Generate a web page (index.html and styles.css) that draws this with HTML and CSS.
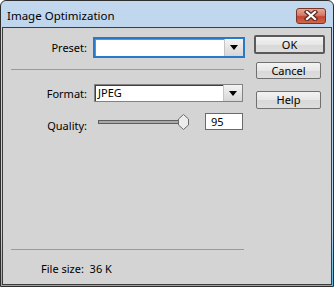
FILE: index.html
```html
<!DOCTYPE html>
<html lang="en">
<head>
    <meta charset="UTF-8">
    <title>Image Optimization</title>
    <link rel="stylesheet" href="styles.css">
</head>
<body>

    <div class="window">

        <!-- Title bar -->
        <div class="titlebar">
            <span class="title">Image Optimization</span>
            <div class="close">
                <svg width="16" height="11" viewBox="0 0 16 11">
                    <path d="M4 2 L12 9 M12 2 L4 9" stroke="#5a2a22" stroke-width="4.5" stroke-linecap="square"/>
                    <path d="M4 2 L12 9 M12 2 L4 9" stroke="#ffffff" stroke-width="2.2" stroke-linecap="square"/>
                </svg>
            </div>
        </div>

        <div class="client">

            <!-- Settings -->
            <div class="main">
                <div class="row preset-row">
                    <span class="label">Preset:</span>
                    <div class="combo focused">
                        <span class="combo-value"></span>
                        <span class="combo-arrow"><i class="tri"></i></span>
                    </div>
                </div>

                <div class="sep"></div>

                <div class="row format-row">
                    <span class="label">Format:</span>
                    <div class="combo">
                        <span class="combo-value">JPEG</span>
                        <span class="combo-arrow"><i class="tri"></i></span>
                    </div>
                </div>

                <div class="row quality-row">
                    <span class="label quality-label">Quality:</span>
                    <div class="slider">
                        <div class="track"></div>
                        <svg class="thumb" width="11" height="16" viewBox="0 0 11 16">
                            <path d="M5.5 0.5 L10.5 5 L10.5 11 L5.5 15.5 L0.5 11 L0.5 5 Z" fill="#ececec" stroke="#6a6a6a"/>
                        </svg>
                    </div>
                    <div class="number">95</div>
                </div>

                <div class="bottom">
                    <div class="sep sep-bottom"></div>
                    <div class="filesize">File size:&nbsp; 36 K</div>
                </div>
            </div>

            <!-- Dialog buttons -->
            <div class="buttons">
                <div class="btn btn-default">OK</div>
                <div class="btn btn-cancel">Cancel</div>
                <div class="btn btn-help">Help</div>
            </div>

        </div>
    </div>

</body>
</html>
```

FILE: styles.css
```css
body {
    margin: 0;
    padding: 0;
    background-color: #ffffff;
    font-family: "Noto Sans", "Open Sans", sans-serif;
    font-size: 11px;
    color: #000000;
}

/* Window frame */
.window {
    width: 334px;
    height: 287px;
    box-sizing: border-box;
    border: 1px solid #2e2e2e;
    border-radius: 6px 6px 0 0;
    background: linear-gradient(#c2d8ee, #b6cee8 40%, #bcd4ec 80%, #5cb6e6);
    display: flex;
    flex-direction: column;
}

.titlebar {
    height: 26px;
    display: flex;
    align-items: center;
    justify-content: space-between;
    padding: 2px 7px 0 6px;
    box-sizing: border-box;
}

.title {
    font-size: 11.5px;
    color: #000000;
}

.close {
    width: 30px;
    height: 16px;
    box-sizing: border-box;
    border: 1px solid #7a3328;
    border-radius: 3px;
    background: linear-gradient(#e6a796, #d47a66 45%, #c4442e 55%, #d2664a);
    display: flex;
    align-items: center;
    justify-content: center;
    margin-top: 1px;
}

/* Client area */
.client {
    flex: 1;
    margin: 0 1px 1px 1px;
    border: 1px solid #3c3c3c;
    background-color: #d4d4d4;
    display: grid;
    grid-template-columns: 235px 71px;
    column-gap: 8px;
    padding: 9px 6px 7px 8px;
}

.main {
    display: flex;
    flex-direction: column;
}

.row {
    display: flex;
    align-items: center;
}

.label {
    width: 76px;
    text-align: right;
    margin-right: 6px;
    flex-shrink: 0;
}

/* Combo boxes */
.combo {
    display: flex;
    box-sizing: border-box;
    background-color: #ffffff;
    border: 1px solid #828282;
    box-shadow: inset 1px 1px 0 #404040;
}

.preset-row .combo {
    width: 152px;
    height: 21px;
}

.combo.focused {
    border: 2px solid #2a78c8;
    box-shadow: inset 1px 1px 0 #8a8a8a;
}

.format-row {
    margin-top: 14px;
}

.format-row .combo {
    width: 149px;
    height: 18px;
    margin-left: 1px;
}

.combo-value {
    flex: 1;
    padding-left: 3px;
    line-height: 15px;
}

.combo-arrow {
    width: 18px;
    border-left: 1px solid #c4c4c4;
    background: linear-gradient(#f4f4f4, #d6d6d6);
    display: flex;
    align-items: center;
    justify-content: center;
}

.tri {
    width: 0;
    height: 0;
    border-left: 4px solid transparent;
    border-right: 4px solid transparent;
    border-top: 5px solid #000000;
}

.sep {
    height: 1px;
    width: 233px;
    background-color: #9a9a9a;
}

.preset-row + .sep {
    margin-top: 11px;
}

/* Quality slider */
.quality-row {
    margin-top: 11px;
    height: 17px;
}

.quality-label {
    padding-top: 7px;
}

.slider {
    width: 96px;
    height: 16px;
    display: flex;
    align-items: center;
    margin-left: 5px;
}

.track {
    width: 84px;
    height: 4px;
    box-sizing: border-box;
    border: 1px solid #5e5e5e;
    background-color: #a8a8a8;
    margin-right: -4px;
}

.thumb {
    display: block;
}

.number {
    width: 38px;
    height: 17px;
    box-sizing: border-box;
    border: 1px solid #6a6a6a;
    background-color: #ffffff;
    margin-left: 11px;
    padding-left: 5px;
    line-height: 15px;
}

.bottom {
    margin-top: auto;
}

.sep-bottom {
    margin-bottom: 11px;
}

.filesize {
    padding-left: 30px;
    height: 16px;
    line-height: 16px;
}

/* Buttons */
.buttons {
    display: flex;
    flex-direction: column;
    align-items: flex-start;
    margin-top: -2px;
}

.btn {
    box-sizing: border-box;
    text-align: center;
    background: linear-gradient(#f3f3f3, #e6e6e6 50%, #d8d8d8 51%, #dedede);
    border: 1px solid #707070;
    border-radius: 2px;
}

.btn-default {
    width: 71px;
    height: 19px;
    border: 2px solid #5a5a5a;
    line-height: 15px;
}

.btn-cancel {
    width: 65px;
    height: 17px;
    margin: 8px 0 0 2px;
    line-height: 15px;
}

.btn-help {
    width: 65px;
    height: 18px;
    margin: 12px 0 0 2px;
    line-height: 16px;
}
```
